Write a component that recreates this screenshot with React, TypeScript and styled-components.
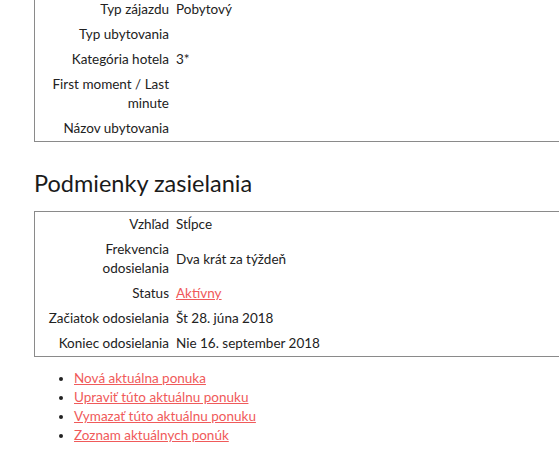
import React from "react";
import styled, { createGlobalStyle } from "styled-components";

const Global = createGlobalStyle`
  html, body { margin: 0; padding: 0; background: #fff; overflow: hidden; }
  body { font-family: Lato, "Noto Sans", sans-serif; color: #222; font-size: 13.5px; }
`;

const Page = styled.div`
  width: 559px;
  height: 461px;
  overflow: hidden;
  padding-left: 34px;
  box-sizing: border-box;
`;

const InfoTable = styled.div<{ $top?: number }>`
  width: 600px;
  border: 1px solid #8a8a8a;
  padding: 0;
  margin-top: ${(p) => p.$top ?? 0}px;
  display: grid;
  grid-template-columns: 134px 1fr;
  column-gap: 7px;
`;

const Label = styled.div`
  text-align: right;
  padding: 3px 0 3px 6px;
  line-height: 19px;
  display: flex;
  align-items: center;
  justify-content: flex-end;
`;

const Value = styled.div`
  padding: 3px 0;
  line-height: 19px;
  display: flex;
  align-items: center;
`;

const Heading = styled.h2`
  font-size: 23.5px;
  font-weight: 400;
  margin: 27px 0 14px;
  line-height: 28px;
  color: #1a1a1a;
`;

const Link = styled.a`
  color: #f05a5a;
  text-decoration: underline;
  cursor: pointer;
`;

const Links = styled.ul`
  margin: 12px 0 0;
  padding-left: 40px;
  line-height: 19px;
  list-style: disc;
`;

type Row = [string, React.ReactNode];

const tourRows: Row[] = [
  ["Typ zájazdu", "Pobytový"],
  ["Typ ubytovania", ""],
  ["Kategória hotela", "3*"],
  ["First moment / Last minute", ""],
  ["Názov ubytovania", ""],
];

const sendRows: Row[] = [
  ["Vzhľad", "Stĺpce"],
  ["Frekvencia odosielania", "Dva krát za týždeň"],
  ["Status", <Link>Aktívny</Link>],
  ["Začiatok odosielania", "Št 28. júna 2018"],
  ["Koniec odosielania", "Nie 16. september 2018"],
];

const Table = ({ rows, top }: { rows: Row[]; top?: number }) => (
  <InfoTable $top={top}>
    {rows.map(([l, v], i) => (
      <React.Fragment key={i}>
        <Label>{l}</Label>
        <Value>{v}</Value>
      </React.Fragment>
    ))}
  </InfoTable>
);

export default function App() {
  return (
    <>
      <Global />
      <Page>
        <Table rows={tourRows} top={-4} />
        <Heading>Podmienky zasielania</Heading>
        <Table rows={sendRows} />
        <Links>
          <li><Link>Nová aktuálna ponuka</Link></li>
          <li><Link>Upraviť túto aktuálnu ponuku</Link></li>
          <li><Link>Vymazať túto aktuálnu ponuku</Link></li>
          <li><Link>Zoznam aktuálnych ponúk</Link></li>
        </Links>
      </Page>
    </>
  );
}
